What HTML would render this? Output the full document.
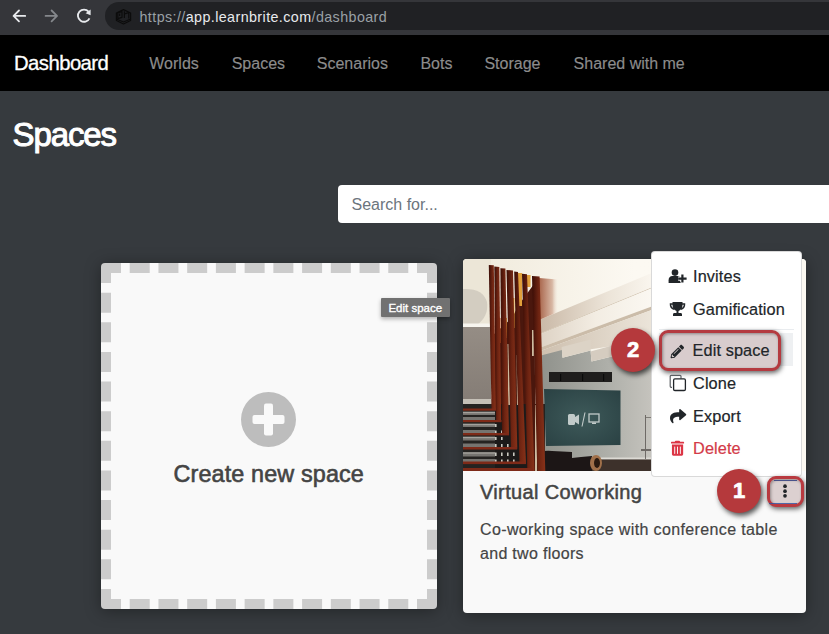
<!DOCTYPE html>
<html><head><meta charset="utf-8">
<style>
*{margin:0;padding:0;box-sizing:border-box}
html,body{width:829px;height:634px;overflow:hidden;background:#363a3e;font-family:"Liberation Sans",sans-serif}
.abs{position:absolute}
.t{position:absolute;white-space:nowrap;line-height:1}
#tb{left:0;top:0;width:829px;height:35px;background:#35363a}
#pill{left:105px;top:2px;width:760px;height:28px;border-radius:14px;background:#202124}
#nav{left:0;top:35px;width:829px;height:56px;background:#000}
.nl{color:#8c8c8c;font-size:16px;-webkit-text-stroke:.15px #8c8c8c}
#search{left:338px;top:185px;width:520px;height:38px;background:#fff;border-radius:4px}
#create{left:101px;top:263px;width:336px;height:346px;background:#f9f9f9;border:10px dashed #ccc;border-radius:4px;box-shadow:0 2px 16px rgba(0,0,0,.36)}
#card{left:463px;top:259px;width:343px;height:354px;background:#f9f9f9;border-radius:4px;overflow:hidden;box-shadow:0 2px 16px rgba(0,0,0,.36)}
#menu{left:651px;top:251px;width:151px;height:226px;background:#fff;border:1px solid rgba(0,0,0,.15);border-radius:4px}
.mi{font-size:16.3px;letter-spacing:.12px;color:#212529;-webkit-text-stroke:.2px currentColor}
.badge{position:absolute;width:44px;height:44px;border-radius:50%;background:#b5393c;color:#fff;font-weight:bold;font-size:22px;text-align:center;line-height:43px;box-shadow:2px 3px 5px rgba(0,0,0,.65);-webkit-text-stroke:.7px #fff}
</style></head><body>
<div id="tb" class="abs"></div>
<svg class="abs" style="left:0;top:0" width="105" height="35">
  <g fill="none" stroke="#e8eaed" stroke-width="1.8" stroke-linecap="round" stroke-linejoin="round">
    <path d="M13.6 15.9H25.2M19 10.5L13.6 15.9L19 21.3"/>
  </g>
  <g fill="none" stroke="#85888c" stroke-width="1.8" stroke-linecap="round" stroke-linejoin="round">
    <path d="M45.6 15.9H57M51.6 10.5L57 15.9L51.6 21.3"/>
  </g>
  <path d="M88.6 11.6A6.1 6.1 0 1 0 89.5 18.3" fill="none" stroke="#e8eaed" stroke-width="1.8"/>
  <path d="M85.6 13.2L90.6 9.6L90.6 15.2Z" fill="#e8eaed"/>
</svg>
<div id="pill" class="abs"></div>
<svg class="abs" style="left:114px;top:8px" width="20" height="18" viewBox="114 8 20 18">
  <g fill="none" stroke="#0c0c0c" stroke-width="1.2" stroke-linejoin="round">
    <path d="M123.5 9.6L130.6 13V20.5L123.5 24L116.4 20.5V13Z"/>
    <path d="M116.4 19L123.5 22L130.6 19"/>
    <path d="M117.8 12.6V18.6L122 17.4V11.6ZM119.6 13.6V16"/>
    <path d="M124.4 11.2V18M124.4 13.8L128.8 12.6V18.6"/>
  </g>
</svg>
<div class="t" style="left:139.5px;top:9.5px;font-size:14.3px;letter-spacing:.41px;color:#9aa0a6">https://<span style="color:#e8eaed">app.learnbrite.com</span>/dashboard</div>

<div id="nav" class="abs"></div>
<div class="t" style="left:14px;top:52.5px;font-size:20.3px;letter-spacing:-.55px;color:#fff;-webkit-text-stroke:.3px #fff">Dashboard</div>
<div class="t nl" style="left:149.3px;top:55.6px">Worlds</div>
<div class="t nl" style="left:231.7px;top:55.6px">Spaces</div>
<div class="t nl" style="left:316.8px;top:55.6px">Scenarios</div>
<div class="t nl" style="left:420.4px;top:55.6px">Bots</div>
<div class="t nl" style="left:484.4px;top:55.6px">Storage</div>
<div class="t nl" style="left:573.6px;top:55.6px">Shared with me</div>

<div class="t" style="left:12.5px;top:118px;font-size:33px;letter-spacing:-1.1px;color:#fff;-webkit-text-stroke:1px #fff">Spaces</div>

<div id="search" class="abs"></div>
<div class="t" style="left:351.5px;top:197px;font-size:16px;color:#6c757d">Search for...</div>

<div id="create" class="abs"></div>
<svg class="abs" style="left:241px;top:391.5px" width="55" height="55">
  <circle cx="27.5" cy="27.5" r="27.5" fill="#bdbdbd"/>
  <rect x="11.5" y="23" width="32" height="9" rx="2" fill="#f9f9f9"/>
  <rect x="23" y="11.5" width="9" height="32" rx="2" fill="#f9f9f9"/>
</svg>
<div class="t" style="left:173.5px;top:463px;font-size:23.4px;letter-spacing:.12px;color:#444;-webkit-text-stroke:.6px #444">Create new space</div>

<div id="card" class="abs">
  <svg class="abs" style="left:0;top:0" width="343" height="212" viewBox="463 259 343 212">
<defs>
<linearGradient id="ceil" x1="0" y1="0" x2="1" y2="0">
<stop offset="0" stop-color="#efe9da"/><stop offset=".5" stop-color="#fcf9f2"/><stop offset="1" stop-color="#fbf8f1"/>
</linearGradient>
<linearGradient id="wallL" x1="0" y1="0" x2="0" y2="1">
<stop offset="0" stop-color="#958d85"/><stop offset="1" stop-color="#857d76"/>
</linearGradient>
<linearGradient id="wallB" x1="0" y1="0" x2="1" y2="0">
<stop offset="0" stop-color="#8f918b"/><stop offset=".6" stop-color="#aeafa9"/><stop offset="1" stop-color="#c6c4be"/>
</linearGradient>
<radialGradient id="tv" cx=".5" cy=".5" r=".7">
<stop offset="0" stop-color="#3e5a5a"/><stop offset="1" stop-color="#2a4143"/>
</radialGradient>
<linearGradient id="slat" x1="0" y1="0" x2="1" y2="0">
<stop offset="0" stop-color="#3a0d06"/><stop offset=".5" stop-color="#6e2412"/><stop offset="1" stop-color="#883219"/>
</linearGradient>
<linearGradient id="refl" x1="0" y1="0" x2="1" y2="0">
<stop offset="0" stop-color="#a8644a"/><stop offset=".7" stop-color="#d8b8a5"/><stop offset="1" stop-color="#f2e8dc" stop-opacity="0"/>
</linearGradient>
<linearGradient id="bu" x1="0" y1="0" x2="1" y2="0">
<stop offset="0" stop-color="#c9b8a6"/><stop offset=".6" stop-color="#ece4d8"/><stop offset="1" stop-color="#faf6ef"/>
</linearGradient>
<linearGradient id="bf" x1="0" y1="0" x2="1" y2="0">
<stop offset="0" stop-color="#ddd2c4"/><stop offset=".5" stop-color="#f3ede3"/><stop offset="1" stop-color="#fbf8f2"/>
</linearGradient>
<linearGradient id="bl" x1="0" y1="0" x2="1" y2="0">
<stop offset="0" stop-color="#cdbfae"/><stop offset="1" stop-color="#ece5da"/>
</linearGradient>
</defs>
<rect x="463" y="259" width="343" height="213" fill="url(#ceil)"/>
<!-- left wall upper cream & lamp -->
<rect x="463" y="259" width="28" height="68" fill="#ece6d7"/>
<path d="M463 289 Q483 288 487 302 Q489 316 477 325 L463 325Z" fill="#d3cdc1"/>
<rect x="463" y="323.5" width="28" height="3.5" fill="#f7f5ef"/>
<rect x="463" y="327" width="28" height="72" fill="url(#wallL)"/>
<!-- ceiling beams -->
<path d="M539 320 L653 272.5 L653 287 L539 334Z" fill="url(#bu)"/>
<path d="M539 334 L653 287 L653 287.8 L539 334.8Z" fill="#cbbca8"/>
<path d="M539 334.8 L653 287.8 L653 306 L539 348Z" fill="url(#bf)"/>
<path d="M539 348 L653 306 L653 309.5 L539 351.5Z" fill="#cbbca9"/>
<path d="M539 351.5 L653 309.5 L653 340 L539 357Z" fill="url(#bl)"/>
<path d="M539 278 L558 279.5 L558 312 L539 320Z" fill="url(#refl)"/>
<!-- back wall -->
<path d="M539 356 L562 350 L562.5 357.8 L590.6 350.5 L591.5 361.4 L614 356 L653 344 L653 472 L539 472Z" fill="url(#wallB)"/>
<path d="M561.6 346.9 L590.6 339.5 L590.6 350.5 L562.5 357.8Z" fill="#dcd3c6"/>
<path d="M590.6 351.4 L614 345 L614 356 L591.5 361.4Z" fill="#d5ccc0"/>
<rect x="549" y="372" width="63" height="10" fill="#1f1e1d"/>
<g fill="#0a0a0a"><rect x="560" y="374" width="1.2" height="7"/><rect x="582" y="374" width="1.2" height="7"/><rect x="603" y="374" width="1.2" height="7"/></g>
<path d="M544 389 L620.5 390.5 L620.5 445 L546 446Z" fill="url(#tv)"/>
<g fill="#c2cbca">
<rect x="568" y="414" width="7" height="11" rx="1.5"/><path d="M575 417 L579 414.5 L579 424.5 L575 422Z"/>
<rect x="589" y="414" width="10" height="8" fill="none" stroke="#c2cbca" stroke-width="1.3"/>
<rect x="592" y="422.5" width="4" height="1.5"/>
</g>
<path d="M585 412.5 L582 426.5" stroke="#c2cbca" stroke-width="1.1"/>
<rect x="541" y="457.5" width="112" height="2" fill="#dcdad4"/>
<rect x="541" y="459.5" width="112" height="12.5" fill="#3d312b"/>
<path d="M536 455 Q540 450 552 451 L572 452 L572 472 L536 472Z" fill="#1c1616"/>
<path d="M570 458 L592 456 L592 472 L570 472Z" fill="#1c1616"/>
<ellipse cx="596" cy="463" rx="6" ry="8" fill="#a0704a"/><ellipse cx="597" cy="463" rx="3" ry="5" fill="#2a1a10"/>
<g fill="#5a5552" opacity=".8">
<rect x="645" y="415" width="1" height="44"/><rect x="645" y="417" width="6" height=".8"/>
<rect x="641" y="449" width="10" height="2"/>
</g>
<!-- stairs -->
<rect x="463" y="399" width="32" height="5" fill="#c5c0b7"/>
<rect x="463" y="404" width="82" height="68" fill="#252321"/>
<g fill="#767470">
<rect x="463" y="411.5" width="33" height="3.5"/><rect x="463" y="417" width="36" height="3.5"/>
<rect x="463" y="423.5" width="40" height="3.5"/><rect x="463" y="430" width="42" height="3.5"/>
<rect x="463" y="436.5" width="46" height="4"/><rect x="463" y="443.5" width="48" height="4"/>
<rect x="463" y="452" width="52" height="4.5"/><rect x="463" y="459" width="55" height="4.5"/>
</g>
<g fill="#a3a19c">
<rect x="463" y="412" width="33" height="1.2"/><rect x="463" y="424" width="40" height="1.2"/><rect x="463" y="437" width="46" height="1.2"/><rect x="463" y="452.5" width="52" height="1.2"/>
</g>
<!-- slat gaps -->
<path d="M493 335 L512 318 L518 306 L534 284 L536 471 L527 471 L526 404 L495 404Z" fill="#4a170d"/>
<rect x="495" y="404" width="32" height="67" fill="#1c1a19"/>
<g fill="#c8c8c0">
<rect x="495" y="424" width="1.6" height="3"/><rect x="495" y="430.5" width="1.6" height="3"/><rect x="501" y="430.5" width="1.6" height="3"/>
<rect x="495" y="437" width="1.6" height="3"/><rect x="501" y="437" width="1.6" height="3"/><rect x="495" y="444" width="1.6" height="3"/><rect x="501" y="444" width="1.6" height="3"/><rect x="507" y="444" width="1.6" height="3"/>
<rect x="495" y="452.5" width="1.6" height="3.5"/><rect x="501" y="452.5" width="1.6" height="3.5"/><rect x="507" y="452.5" width="1.6" height="3.5"/><rect x="513" y="452.5" width="1.6" height="3.5"/>
<rect x="495" y="459.5" width="1.6" height="3.5"/><rect x="501" y="459.5" width="1.6" height="3.5"/><rect x="507" y="459.5" width="1.6" height="3.5"/><rect x="513" y="459.5" width="1.6" height="3.5"/>
</g>

<g fill="#e0a03a">
<rect x="518" y="273" width="4" height="33"/>
<rect x="527" y="275" width="3.5" height="12"/>
<rect x="512.5" y="298" width="2" height="30"/>
<rect x="505.5" y="318" width="1.5" height="20"/>
</g>
<g fill="#b84a1c"><rect x="504" y="300" width="2" height="40"/><rect x="499" y="318" width="1.5" height="25"/></g>
<g fill="#cdbba0">
<path d="M507.5 344 L509.5 344 L510.8 405 L508.2 405Z"/>
<path d="M516.6 355 L518.4 355 L518.8 405 L517 405Z"/>
<rect x="532" y="330" width="1.8" height="26"/>
<rect x="535" y="405" width="2" height="66"/>
</g>
<!-- slats -->
<g fill="url(#slat)">
<path d="M488.8 265 L493.8 265.3 L496 410 L491.5 410Z"/>
<path d="M494.3 266.6 L499.3 267 L501.2 421.6 L496 421.6Z"/>
<path d="M500.4 268.3 L505.4 268.6 L509 434.6 L502 434.6Z"/>
<path d="M506.5 270 L513 270.4 L517.3 448.8 L511 448.8Z"/>
<path d="M514.2 271.6 L518 272 L526 463.6 L519.5 463.6Z"/>
<path d="M522 273.8 L527 274.2 L534.5 471 L527.5 471Z"/>
<path d="M532 276 L539.6 276.5 L545.3 471 L537.3 471Z"/>
</g>
<g fill="#7e2a18">
<rect x="463" y="408.5" width="33" height="2.2"/>
<rect x="463" y="420" width="38.5" height="2.2"/>
<rect x="463" y="433" width="46" height="2.4"/>
<rect x="463" y="447" width="54" height="2.5"/>
<rect x="463" y="461.5" width="63" height="2.6"/>
<rect x="463" y="468" width="70" height="3"/>
</g>
</svg>



</div>
<div class="t" style="left:480px;top:481.7px;font-size:20px;letter-spacing:.35px;color:#444;-webkit-text-stroke:.5px #444">Virtual Coworking</div>
<div class="t" style="left:480px;top:521.8px;font-size:16px;letter-spacing:.37px;color:#444;-webkit-text-stroke:.2px #444">Co-working space with conference table</div>
<div class="t" style="left:480px;top:546.2px;font-size:16px;letter-spacing:.3px;color:#444;-webkit-text-stroke:.2px #444">and two floors</div>

<div id="menu" class="abs"></div>
<div class="abs" style="left:659px;top:329px;width:135px;height:1px;background:#e9ecef"></div>
<div class="abs" style="left:659px;top:333px;width:134px;height:33px;background:#eef0f2"></div>
<div class="abs" style="left:658.7px;top:329.6px;width:122px;height:41px;border:3px solid #b43a40;border-radius:9px;background:#d8cccd;box-shadow:1px 2px 5px rgba(0,0,0,.62), inset 1px 1px 3px rgba(0,0,0,.35)"></div>
<svg class="abs" style="left:660px;top:260px" width="40" height="205" viewBox="660 260 40 205">
  <!-- user-plus -->
  <g fill="#212529">
    <circle cx="675" cy="272.6" r="3.3"/>
    <path d="M668.6 283 L668.6 280.5 Q668.6 276.2 672.5 276 L677.5 276 Q680.5 276.2 681 279 L681 283Z"/>
  </g>
  <path d="M682.4 274.5V282.5M678.2 278.6H686.6" stroke="#fff" stroke-width="4.4"/>
  <path d="M682.4 274.5V282.5M678.2 278.6H686.6" stroke="#212529" stroke-width="2.2"/>
  <!-- trophy -->
  <g fill="#212529">
    <path d="M672.5 302 H682.5 V305 Q682.5 309.5 678.5 311 V313 H681 Q682 313 682 314.5 V316 H673 V314.5 Q673 313 674 313 H676.5 V311 Q672.5 309.5 672.5 305Z"/>
  </g>
  <path d="M673 304 H670.5 Q670.3 308 674 309.3 M682 304 H684.5 Q684.7 308 681 309.3" fill="none" stroke="#212529" stroke-width="1.5"/>
  <!-- pencil -->
  <g transform="translate(670.6 344.8) scale(0.0262)" fill="#212529">
    <path d="M497.9 142.1l-46.1 46.1c-4.7 4.7-12.3 4.7-17 0l-111-111c-4.7-4.7-4.7-12.3 0-17l46.1-46.1c18.7-18.7 49.1-18.7 67.9 0l60.1 60.1c18.8 18.7 18.8 49.1 0 67.9zM284.2 99.8L21.6 362.4.4 483.9c-2.9 16.4 11.4 30.6 27.8 27.8l121.5-21.3 262.6-262.6c4.7-4.7 4.7-12.3 0-17l-111-111c-4.8-4.7-12.4-4.7-17.1 0zM124.1 339.9c-5.5-5.5-5.5-14.3 0-19.8l154-154c5.5-5.5 14.3-5.5 19.8 0s5.5 14.3 0 19.8l-154 154c-5.5 5.5-14.3 5.5-19.8 0zM88 424h48v36.3l-64.5 11.3-31.1-31.1L51.7 376H88v48z"/>
  </g>
  <!-- clone -->
  <path d="M672 387.3 H671.2 Q670.2 387.3 670.2 386.3 V376.3 Q670.2 375.3 671.2 375.3 H680 Q681 375.3 681 376.3 V378.5" fill="none" stroke="#5a5e62" stroke-width="1.2"/>
  <rect x="673.6" y="378.9" width="11.8" height="11.6" rx="1.3" fill="#fff" stroke="#212529" stroke-width="1.3"/>
  <!-- share -->
  <g transform="translate(670 408) scale(0.0318)" fill="#212529">
    <path d="M503.691 189.836L327.687 37.851C312.281 24.546 288 35.347 288 56.015v80.053C127.371 137.907 0 170.1 0 322.326c0 61.441 39.581 122.309 83.333 154.132 13.653 9.931 33.111-2.533 28.077-18.631C66.066 312.814 132.917 274.316 288 272.085V360c0 20.7 24.3 31.453 39.687 18.164l176.004-152c11.071-9.562 11.086-26.753 0-36.328z"/>
  </g>
  <!-- trash -->
  <g transform="translate(671 440.8) scale(0.0292)" fill="#dc3545">
    <path d="M32 464a48 48 0 0 0 48 48h288a48 48 0 0 0 48-48V128H32zm272-256a16 16 0 0 1 32 0v224a16 16 0 0 1-32 0zm-96 0a16 16 0 0 1 32 0v224a16 16 0 0 1-32 0zm-96 0a16 16 0 0 1 32 0v224a16 16 0 0 1-32 0zM432 32H312l-12-24a24 24 0 0 0-21.5-13.3H163.3A23.7 23.7 0 0 0 142 8l-12 24H16A16 16 0 0 0 0 48v32a16 16 0 0 0 16 16h416a16 16 0 0 0 16-16V48a16 16 0 0 0-16-16z"/>
  </g>
</svg>

<div class="t mi" style="left:693px;top:267.5px">Invites</div>
<div class="t mi" style="left:693px;top:300.8px">Gamification</div>
<div class="t mi" style="left:692.5px;top:341.7px">Edit space</div>
<div class="t mi" style="left:693px;top:374.5px">Clone</div>
<div class="t mi" style="left:693px;top:407.8px">Export</div>
<div class="t mi" style="left:693px;top:440.3px;color:#d33a48">Delete</div>

<div class="abs" style="left:766.6px;top:475.6px;width:37.5px;height:31.5px;border:3.2px solid #b93a40;border-radius:9px;background:#dcd0d0;box-shadow:1px 2px 5px rgba(0,0,0,.62), inset 1px 1px 3px rgba(0,0,0,.35)"></div>
<div class="abs" style="left:774px;top:479.5px;width:23px;height:1.2px;background:#2a3a80;opacity:.8"></div>
<div class="abs" style="left:769px;top:502.6px;width:28px;height:1.3px;background:#3050a0;opacity:.8"></div>
<svg class="abs" style="left:780px;top:482px" width="10" height="18">
  <g fill="#212529"><circle cx="5" cy="4.2" r="1.85"/><circle cx="5" cy="9.2" r="1.85"/><circle cx="5" cy="13.8" r="1.85"/></g>
</svg>

<div class="badge" style="left:611px;top:328px">2</div>
<div class="badge" style="left:717.2px;top:469px">1</div>

<div class="abs" style="left:381.4px;top:297.7px;width:68.6px;height:19.3px;background:#717171;border-radius:1px;box-shadow:0 2px 4px rgba(0,0,0,.3)"></div>
<div class="t" style="left:388.4px;top:302.5px;font-size:11.5px;color:#fff;-webkit-text-stroke:.35px #fff">Edit space</div>
</body></html>
